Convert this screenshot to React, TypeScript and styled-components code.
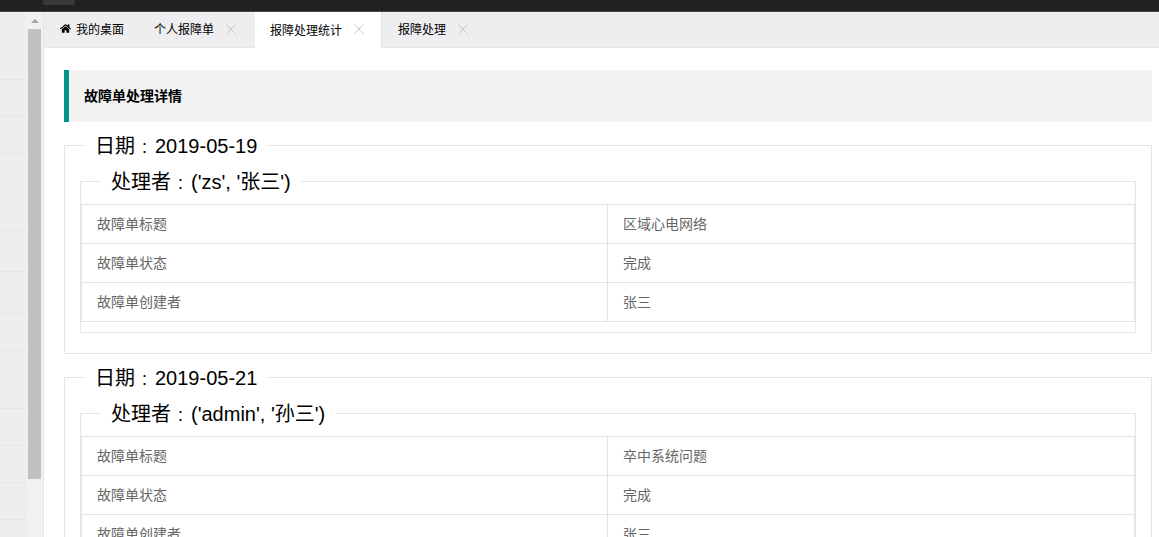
import styled, { createGlobalStyle } from "styled-components";
import { FaHome } from "react-icons/fa";

const GlobalStyle = createGlobalStyle`
  html, body {
    margin: 0;
    padding: 0;
    height: 100%;
    overflow: hidden;
    background: #fff;
  }
  body {
    font-family: "Liberation Sans", "Noto Sans CJK SC", sans-serif;
    font-size: 12px;
    color: #000;
  }
`;

const sideRows = [68, 37, 37, 77, 41, 42, 37, 58, 37, 37, 37];

const tabs = [
  { label: "个人报障单", active: false, width: 115, pad: 14 },
  { label: "报障处理统计", active: true, width: 127, pad: 15 },
  { label: "报障处理", active: false, width: 103, pad: 16 },
];

const groups = [
  { date: "2019-05-19", owner: "('zs', '张三')", title: "区域心电网络", creator: "张三" },
  { date: "2019-05-21", owner: "('admin', '孙三')", title: "卒中系统问题", creator: "张三" },
];

const CloseIcon = () => (
  <svg width="10" height="10" viewBox="0 0 10 10">
    <path d="M0.5 0.5 L9.5 9.5 M9.5 0.5 L0.5 9.5" stroke="#c6c6c6" strokeWidth="1" fill="none" />
  </svg>
);

const App = () => {
  return (
    <Page>
      <GlobalStyle />
      <TopBar>
        <TopButton />
      </TopBar>
      <Body>
        <Sidebar>
          {sideRows.map((h, i) => (
            <SideRow key={i} $h={h} />
          ))}
        </Sidebar>
        <ScrollTrack>
          <ScrollArrow />
          <ScrollThumb />
        </ScrollTrack>
        <Main>
          <TabBar>
            <HomeTab>
              <FaHome size={11} />
              我的桌面
            </HomeTab>
            {tabs.map((t) => (
              <Tab key={t.label} $active={t.active} $width={t.width} $pad={t.pad}>
                {t.label}
                <CloseIcon />
              </Tab>
            ))}
          </TabBar>
          <Content>
            <Quote>故障单处理详情</Quote>
            {groups.map((g) => (
              <OuterField key={g.date}>
                <Legend>日期<Colon>：</Colon>{g.date}</Legend>
                <InnerField>
                  <Legend>处理者<Colon>：</Colon>{g.owner}</Legend>
                  <Table>
                    <colgroup>
                      <col width="526" />
                      <col />
                    </colgroup>
                    <tbody>
                      <tr>
                        <Cell>故障单标题</Cell>
                        <Cell>{g.title}</Cell>
                      </tr>
                      <tr>
                        <Cell>故障单状态</Cell>
                        <Cell>完成</Cell>
                      </tr>
                      <tr>
                        <Cell>故障单创建者</Cell>
                        <Cell>{g.creator}</Cell>
                      </tr>
                    </tbody>
                  </Table>
                </InnerField>
              </OuterField>
            ))}
          </Content>
        </Main>
      </Body>
    </Page>
  );
};

export default App;

const Page = styled.div`
  display: flex;
  flex-direction: column;
  width: 100vw;
  height: 100vh;
  overflow: hidden;
`;

const TopBar = styled.div`
  flex: none;
  height: 12px;
  background: #222;
  border-bottom: 1px solid #444;
  box-sizing: border-box;
  padding-left: 43px;
`;

const TopButton = styled.div`
  width: 32px;
  height: 5px;
  background: #393939;
  border-radius: 0 0 2px 2px;
`;

const Body = styled.div`
  flex: 1;
  display: flex;
  min-height: 0;
`;

const Sidebar = styled.div`
  flex: none;
  width: 26px;
  background: #eee;
  overflow: hidden;
`;

const SideRow = styled.div<{ $h: number }>`
  height: ${(p) => p.$h}px;
  box-sizing: border-box;
  border-bottom: 1px solid #e6e6e6;
`;

const ScrollTrack = styled.div`
  flex: none;
  width: 18px;
  background: #f1f1f1;
  border-right: 1px solid #e4e4e4;
  box-sizing: border-box;
  padding: 0 2px;
`;

const ScrollArrow = styled.div`
  width: 0;
  height: 0;
  margin: 7px auto 6px;
  border-left: 4px solid transparent;
  border-right: 4px solid transparent;
  border-bottom: 4px solid #a3a3a3;
`;

const ScrollThumb = styled.div`
  height: 450px;
  background: #c1c1c1;
`;

const Main = styled.div`
  flex: 1;
  min-width: 0;
  display: flex;
  flex-direction: column;
  overflow: hidden;
`;

const TabBar = styled.div`
  flex: none;
  height: 36px;
  box-sizing: border-box;
  display: flex;
  background: #eeeef1;
  border-bottom: 1px solid #e6e6e6;
`;

const HomeTab = styled.div`
  flex: none;
  width: 96px;
  box-sizing: border-box;
  padding: 0 0 2px 16px;
  display: flex;
  align-items: center;
  gap: 5px;
  height: 35px;
`;

const Tab = styled.div<{ $active: boolean; $width: number; $pad: number }>`
  flex: none;
  width: ${(p) => p.$width}px;
  height: ${(p) => (p.$active ? 36 : 35)}px;
  box-sizing: border-box;
  padding: 0 0 2px ${(p) => p.$pad}px;
  display: flex;
  align-items: center;
  gap: 12px;
  background: ${(p) => (p.$active ? "#fff" : "transparent")};
  border-right: ${(p) => (p.$active ? "1px solid #e2e2e2" : "none")};
`;

const Content = styled.div`
  padding: 22px 7px 0 20px;
`;

const Quote = styled.div`
  height: 52px;
  box-sizing: border-box;
  margin-bottom: 11px;
  padding: 0 0 2px 15px;
  display: flex;
  align-items: center;
  background: #f2f2f2;
  border-left: 5px solid #009688;
  font-size: 14px;
  font-weight: 700;
`;

const OuterField = styled.fieldset`
  margin: 0 0 11px;
  padding: 0 0 20px;
  border: 1px solid #e6e6e6;
  min-width: 0;
`;

const InnerField = styled.fieldset`
  margin: 11px 15px 0;
  padding: 0;
  border: 1px solid #e6e6e6;
  min-width: 0;
`;

const Legend = styled.legend`
  margin-left: 20px;
  padding: 2px 10px 0;
  font-size: 20px;
  font-weight: 400;
  line-height: 23px;
`;

const Colon = styled.span`
  display: inline-block;
  width: 20px;
  box-sizing: border-box;
  padding-left: 6px;
  font-size: 14px;
  line-height: 14px;
  vertical-align: 1px;
`;

const Table = styled.table`
  width: 100%;
  margin: 10px 0;
  border-collapse: collapse;
  table-layout: fixed;
`;

const Cell = styled.td`
  height: 39px;
  box-sizing: border-box;
  padding: 0 15px 2px;
  border: 1px solid #e2e2e2;
  font-size: 14px;
  color: #666;
`;
